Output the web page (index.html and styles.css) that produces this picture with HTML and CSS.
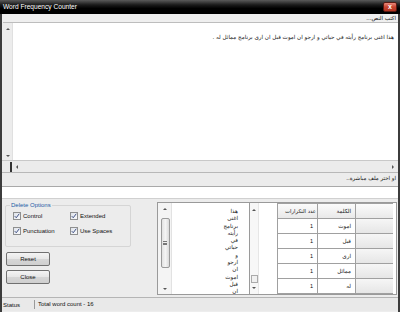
FILE: index.html
```html
<!DOCTYPE html>
<html lang="en">
<head>
<meta charset="utf-8">
<title>Word Frequency Counter</title>
<link rel="stylesheet" href="styles.css">
</head>
<body>
<div class="win">
  <div class="titlebar">
    <span class="title">Word Frequency Counter</span>
    <span class="close">x</span>
  </div>
  <div class="client">
    <div class="lbl" dir="rtl">اكتب النص...</div>
    <div class="editor">
      <div class="vscroll"><span class="arr up"></span><span class="arr down"></span></div>
      <div class="text" dir="rtl">هذا اغنى برنامج رأيته في حياتي و ارجو ان اموت قبل ان ارى برنامج مماثل له .</div>
    </div>
    <div class="hscroll"><span class="hthumb"></span><span class="arr left"></span><span class="arr right"></span></div>
    <div class="lbl lbl2" dir="rtl">او اختر ملف مباشرة..</div>
    <div class="input"></div>
    <div class="panel">
      <div class="leftcol">
        <div class="group">
          <span class="legend">Delete Options</span>
          <div class="opts">
            <label class="chk"><span class="box"><svg viewBox="0 0 8 8" width="6" height="6"><path d="M1 4.2 L3 6.3 L7 1" fill="none" stroke="#2c3f78" stroke-width="1.2"/></svg></span>Control</label>
            <label class="chk"><span class="box"><svg viewBox="0 0 8 8" width="6" height="6"><path d="M1 4.2 L3 6.3 L7 1" fill="none" stroke="#2c3f78" stroke-width="1.2"/></svg></span>Extended</label>
            <label class="chk"><span class="box"><svg viewBox="0 0 8 8" width="6" height="6"><path d="M1 4.2 L3 6.3 L7 1" fill="none" stroke="#2c3f78" stroke-width="1.2"/></svg></span>Punctuation</label>
            <label class="chk"><span class="box"><svg viewBox="0 0 8 8" width="6" height="6"><path d="M1 4.2 L3 6.3 L7 1" fill="none" stroke="#2c3f78" stroke-width="1.2"/></svg></span>Use Spaces</label>
          </div>
        </div>
        <div class="btns">
          <span class="btn">Reset</span>
          <span class="btn">Close</span>
        </div>
      </div>
      <div class="listbox">
        <div class="lscroll"><span class="arr up"></span><span class="lthumb"><span class="grip"></span></span><span class="arr down"></span></div>
        <div class="items" dir="rtl">
          <div>هذا</div><div>اغنى</div><div>برنامج</div><div>رأيته</div><div>في</div><div>حياتي</div><div>و</div><div>ارجو</div><div>ان</div><div>اموت</div><div>قبل</div><div>ان</div>
        </div>
      </div>
      <div class="grid">
        <div class="gscroll"><span class="arr up"></span><span class="gthumb"></span><span class="arr down"></span></div>
        <div class="gblank"></div>
        <div class="table" dir="rtl">
          <div class="row head"><span class="rh"></span><span class="c2">الكلمة</span><span class="c1">عدد التكرارات</span></div>
          <div class="row"><span class="rh"></span><span class="c2">اموت</span><span class="c1">1</span></div>
          <div class="row"><span class="rh"></span><span class="c2">قبل</span><span class="c1">1</span></div>
          <div class="row"><span class="rh"></span><span class="c2">ارى</span><span class="c1">1</span></div>
          <div class="row"><span class="rh"></span><span class="c2">مماثل</span><span class="c1">1</span></div>
          <div class="row"><span class="rh"></span><span class="c2">له</span><span class="c1">1</span></div>
        </div>
      </div>
    </div>
    <div class="status">
      <span class="st1">Status</span>
      <span class="st2">Total word count - 16</span>
    </div>
  </div>
</div>
</body>
</html>
```

FILE: styles.css
```css
* { box-sizing: border-box; }
html, body { margin: 0; padding: 0; }
body {
  width: 400px;
  height: 312px;
  overflow: hidden;
  font-family: "Liberation Sans", "DejaVu Sans", sans-serif;
  font-size: 6px;
  color: #111;
  background: #ececec;
}
.win { width: 400px; height: 312px; display: flex; flex-direction: column; }
.titlebar {
  height: 14px;
  background: linear-gradient(#5a5a5a 0, #1a1a1a 35%, #000 60%, #000 100%);
  display: flex;
  align-items: center;
  justify-content: space-between;
  padding: 0 3px 0 3px;
}
.title { color: #fff; font-size: 6.6px; line-height: 8px; }
.close {
  width: 14px; height: 10px;
  margin-top: -1px;
  border: 1px solid #5a1a12;
  border-radius: 2px;
  background: linear-gradient(#e98a7c, #c8432f 50%, #b23320);
  color: #fff; font-weight: bold; font-size: 7px; line-height: 8px; text-align: center;
}
.client {
  flex: 1;
  display: flex;
  flex-direction: column;
  border-left: 2px solid #3c3c3c;
  border-right: 2px solid #3c3c3c;
  background: #ededed;
  min-height: 0;
}
.lbl {
  height: 8px;
  line-height: 8px;
  padding-right: 2px;
  font-family: "DejaVu Sans", sans-serif;
  font-size: 5.5px;
  background: #efefef;
}
.editor {
  height: 138px;
  display: flex;
  background: #fff;
  margin-left: 1px;
  border-top: 1px solid #bdbdbd;
}
.vscroll {
  width: 10px;
  background: #ececec;
  border-right: 1px solid #e0e0e0;
  display: flex;
  flex-direction: column;
  justify-content: space-between;
  align-items: center;
  padding: 5px 0 3px;
}
.arr { width: 0; height: 0; border: 2px solid transparent; }
.arr.up { border-bottom: 2px solid #555; border-top-width: 0; }
.arr.down { border-top: 2px solid #555; border-bottom-width: 0; }
.arr.left { border-right: 2px solid #555; border-left-width: 0; }
.arr.right { border-left: 2px solid #555; border-right-width: 0; }
.text {
  flex: 1;
  padding: 11px 4px 0 0;
  font-family: "DejaVu Sans", sans-serif;
  font-size: 5.6px;
  line-height: 7px;
}
.hscroll {
  height: 13px;
  background: #ebebeb;
  border-top: 1px solid #c8c8c8;
  border-bottom: 1px solid #b8b8b8;
  display: flex;
  align-items: center;
  padding: 0 4px 0 8px;
  gap: 4px;
}
.hthumb { width: 2px; height: 10px; background: #333; }
.arr.right { margin-left: auto; }
.lbl2 { height: 14px; line-height: 10px; background: #ececec; border-bottom: 1px solid #a9a9a9; }
.input { height: 12px; background: #fff; border-bottom: 1px solid #d0d0d0; }
.panel {
  height: 98px;
  display: flex;
  padding: 3px 0 2px 0;
  background: #ececec;
}
.leftcol { width: 155px; display: flex; flex-direction: column; padding-left: 3px; }
.group {
  position: relative;
  width: 126px;
  height: 42px;
  margin-top: 3px;
  border: 1px solid #d5d5d5;
  border-radius: 2px;
  padding: 6px 0 0 7px;
}
.legend {
  position: absolute;
  top: -5px; left: 4px;
  padding: 0 1px;
  background: #ececec;
  color: #1c5aa6;
  font-size: 6px;
  line-height: 8px;
}
.opts { display: grid; grid-template-columns: 57px 50px; row-gap: 7px; }
.chk { display: flex; align-items: center; gap: 2px; font-size: 6px; line-height: 8px; }
.box {
  width: 8px; height: 8px;
  border: 1px solid #8e8f8f;
  background: linear-gradient(135deg, #dfe3ea, #f8f9fb);
  display: flex;
  align-items: center;
  justify-content: center;
}
.box svg { display: block; }
.btns { display: flex; flex-direction: column; gap: 4px; margin-top: 5px; padding-left: 1px; }
.btn {
  width: 44px; height: 14px;
  border: 1px solid #707070;
  border-radius: 2px;
  background: linear-gradient(#f4f4f4, #e6e6e6 50%, #d6d6d6 51%, #cfcfcf);
  text-align: center;
  line-height: 12px;
  font-size: 6px;
}
.listbox {
  width: 93px;
  display: flex;
  background: #fff;
  border: 1px solid #9a9a9a;
}
.lscroll {
  width: 14px;
  padding: 5px 2px 4px 3px;
  display: flex;
  flex-direction: column;
  align-items: center;
  justify-content: space-between;
  background: #f4f4f4;
  border-right: 1px solid #e2e2e2;
}
.lthumb {
  width: 9px; height: 50px;
  border: 1px solid #9a9a9a;
  border-radius: 2px;
  background: linear-gradient(90deg, #e2e2e2, #f4f4f4 50%, #dadada);
  display: flex; align-items: center; justify-content: center;
  margin: 3px 0 16px;
}
.grip { width: 4px; height: 4px; border-top: 1px solid #777; border-bottom: 1px solid #777; position: relative; }
.grip::after { content: ""; position: absolute; left: 0; right: 0; top: 1px; border-top: 1px solid #777; }
.items {
  flex: 1;
  padding: 5px 11px 0 0;
  font-family: "DejaVu Sans", sans-serif;
  font-size: 5.6px;
  line-height: 7.3px;
  overflow: hidden;
}
.grid {
  flex: 1;
  display: flex;
  background: #fff;
  border: 1px solid #9a9a9a;
  border-left: 0;
  margin-right: 1px;
}
.gscroll {
  width: 9px;
  display: flex;
  flex-direction: column;
  align-items: center;
  padding: 6px 0 5px;
  background: #f7f7f7;
  border-right: 1px solid #e6e6e6;
}
.gthumb { width: 7px; height: 8px; border: 1px solid #aaa; background: #f0f0f0; margin: auto 0 4px; }
.gblank { width: 18px; }
.table { display: flex; flex-direction: column; }
.row { display: flex; height: 15px; }
.row.head { height: 16px; }
.row span {
  border-left: 1px solid #a0a0a0;
  border-bottom: 1px solid #a0a0a0;
  font-family: "DejaVu Sans", sans-serif;
  font-size: 5.6px;
  line-height: 14px;
  padding: 0 4px 0 0;
  text-align: right;
}
.row .rh { width: 38px; background: linear-gradient(#f6f6f6, #e6e6e6); }
.row .c2 { width: 38px; }
.row .c1 { width: 40px; font-family: "Liberation Sans", sans-serif; }
.row.head span { background: linear-gradient(#fbfbfb, #e9e9e9); line-height: 15px; border-top: 1px solid #a0a0a0; }
.row.head .c1 { font-family: "DejaVu Sans", sans-serif; padding-right: 1px; font-size: 5.3px; }
.status {
  height: 14px;
  display: flex;
  align-items: center;
  border-top: 1px solid #b5b5b5;
  background: #e9e9e9;
  padding-left: 1px;
}
.st1 { width: 31px; }
.st2 { border-left: 1px solid #9a9a9a; padding-left: 3px; line-height: 9px; }
```
